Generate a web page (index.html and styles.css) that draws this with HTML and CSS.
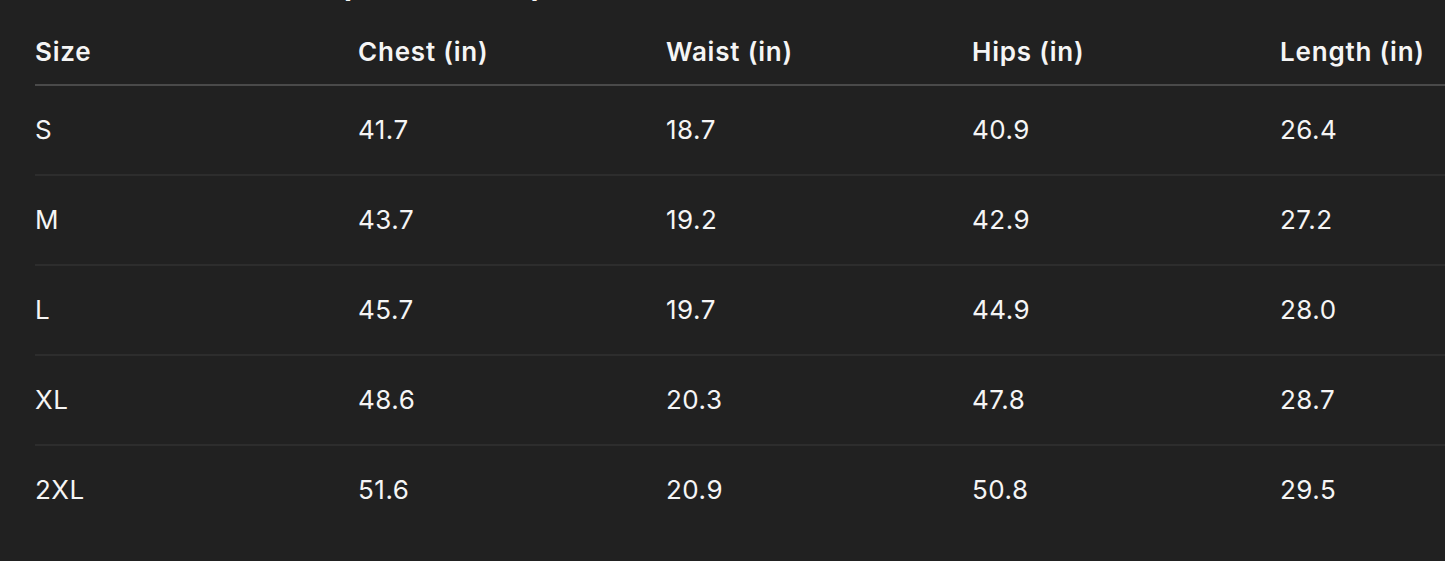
FILE: index.html
```html
<!DOCTYPE html>
<html lang="en">
<head>
<meta charset="utf-8">
<title>Size Chart</title>
<link rel="stylesheet" href="styles.css">
</head>
<body>
<main class="page">
  <h2 class="title">Classic Fit Size Chart (Unisex Sizes)</h2>
  <div class="table-wrap">
    <table class="sizes">
      <colgroup>
        <col class="c1"><col class="c2"><col class="c3"><col class="c4"><col class="c5">
      </colgroup>
      <thead>
        <tr><th>Size</th><th>Chest (in)</th><th>Waist (in)</th><th>Hips (in)</th><th>Length (in)</th></tr>
      </thead>
      <tbody>
        <tr><td>S</td><td>41.7</td><td>18.7</td><td>40.9</td><td>26.4</td></tr>
        <tr><td>M</td><td>43.7</td><td>19.2</td><td>42.9</td><td>27.2</td></tr>
        <tr><td>L</td><td>45.7</td><td>19.7</td><td>44.9</td><td>28.0</td></tr>
        <tr><td>XL</td><td>48.6</td><td>20.3</td><td>47.8</td><td>28.7</td></tr>
        <tr><td>2XL</td><td>51.6</td><td>20.9</td><td>50.8</td><td>29.5</td></tr>
      </tbody>
    </table>
  </div>
</main>
</body>
</html>
```
FILE: styles.css
```css
html, body {
  margin: 0;
  padding: 0;
  background: #212121;
}
body {
  font-family: Inter, "Noto Sans", "Liberation Sans", sans-serif;
  color: #f5f5f5;
  height: 561px;
  overflow: hidden;
}
.page {
  padding-left: 35px;
}
.title {
  margin: -32px 0 0 0;
  font-size: 30px;
  letter-spacing: -0.5px;
  line-height: 36px;
  font-weight: 700;
  color: #f5f5f5;
  white-space: nowrap;
}
.table-wrap {
  margin-top: 33px;
  overflow: hidden;
}
.sizes {
  border-collapse: collapse;
  table-layout: fixed;
  width: 1733px;
}
.c1 { width: 323px; }
.c2 { width: 308px; }
.c3 { width: 306px; }
.c4 { width: 308px; }
.c5 { width: 488px; }
.sizes th {
  text-align: left;
  font-weight: 600;
  font-size: 26px;
  letter-spacing: 0.8px;
  line-height: 30px;
  padding: 0 0 17px 0;
  border-bottom: 2px solid #4a4a4a;
}
.sizes td {
  font-size: 26px;
  letter-spacing: 0.5px;
  line-height: 30px;
  font-weight: 400;
  height: 88px;
  padding: 0;
  vertical-align: middle;
  border-bottom: 2px solid #2d2d2d;
}
.sizes tbody tr:last-child td {
  border-bottom: none;
}
```
